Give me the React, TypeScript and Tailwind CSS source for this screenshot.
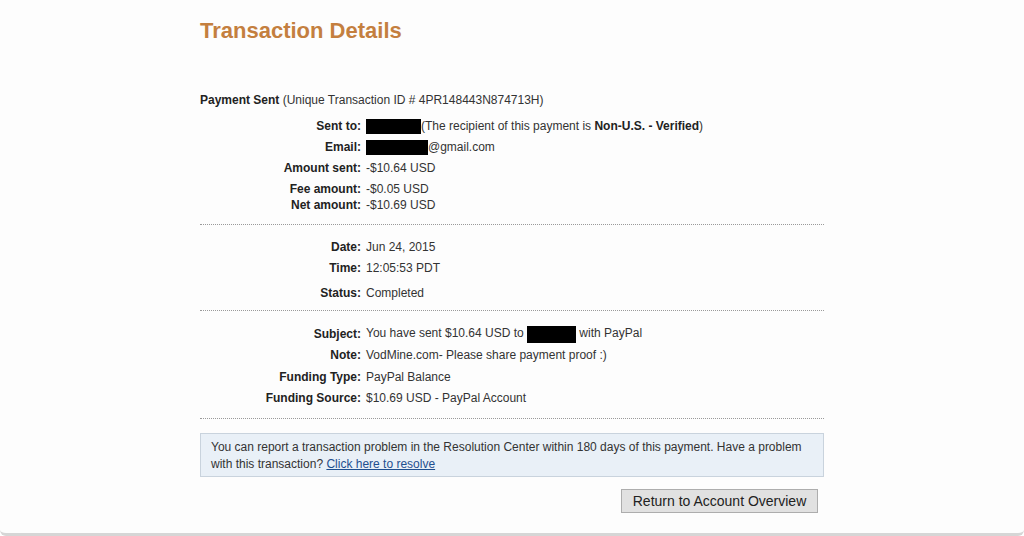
import React from "react";

interface Row {
    label: string;
    value: React.ReactNode;
    mt: string;
}

const Redacted: React.FC<{ className: string }> = ({ className }) => (
    <span className={`inline-block bg-black align-middle ${className}`} />
);

const DetailRow: React.FC<Row> = ({ label, value, mt }) => (
    <div className={`flex h-4 items-center leading-4 ${mt}`}>
        <span className="w-[161px] shrink-0 text-right font-bold text-[#222]">{label}</span>
        <span className="pl-[5px] text-[#333]">{value}</span>
    </div>
);

const Divider: React.FC<{ mt: string }> = ({ mt }) => (
    <div className={`border-t border-dotted border-[#9a9a9a] ${mt}`} />
);

const App: React.FC = () => {
    return (
        <div
            className="h-[536px] w-[1024px] overflow-hidden rounded-b-[6px] border-b-[3px] border-[#d6d6d6] bg-[#fdfdfd] text-[12px]"
            style={{ fontFamily: '"Liberation Sans", Arial, sans-serif' }}
        >
            <div className="mx-auto w-[624px]">
                <h1 className="pt-[18px] text-[22px] font-bold leading-[26px] text-[#c47f3f]">Transaction Details</h1>

                <div className="mt-[48px] h-4 leading-4 text-[#333]">
                    <span className="font-bold text-[#222]">Payment Sent</span> (Unique Transaction ID # 4PR148443N874713H)
                </div>

                <DetailRow
                    label="Sent to:"
                    mt="mt-[10px]"
                    value={
                        <>
                            <Redacted className="h-[15px] w-[55px]" />
                            (The recipient of this payment is <b className="text-[#222]">Non-U.S. - Verified</b>)
                        </>
                    }
                />
                <DetailRow
                    label="Email:"
                    mt="mt-[5px]"
                    value={
                        <>
                            <Redacted className="h-[15px] w-[62px]" />
                            @gmail.com
                        </>
                    }
                />
                <DetailRow label="Amount sent:" mt="mt-[5px]" value="-$10.64 USD" />
                <DetailRow label="Fee amount:" mt="mt-[5px]" value="-$0.05 USD" />
                <DetailRow label="Net amount:" mt="mt-0" value="-$10.69 USD" />

                <Divider mt="mt-[11px]" />

                <DetailRow label="Date:" mt="mt-[14px]" value="Jun 24, 2015" />
                <DetailRow label="Time:" mt="mt-[5px]" value="12:05:53 PDT" />
                <DetailRow label="Status:" mt="mt-[9px]" value="Completed" />

                <Divider mt="mt-[9px]" />

                <DetailRow
                    label="Subject:"
                    mt="mt-[15px]"
                    value={
                        <>
                            You have sent $10.64 USD to <Redacted className="h-[17px] w-[49px]" /> with PayPal
                        </>
                    }
                />
                <DetailRow label="Note:" mt="mt-[5px]" value="VodMine.com- Please share payment proof :)" />
                <DetailRow label="Funding Type:" mt="mt-[6px]" value="PayPal Balance" />
                <DetailRow label="Funding Source:" mt="mt-[5px]" value="$10.69 USD - PayPal Account" />

                <Divider mt="mt-[12px]" />

                <div className="mt-[14px] h-[44px] border border-[#c9d3dd] bg-[#e9f0f7] px-[10px] pt-[5px] leading-[17px] text-[#333]">
                    <p>
                        You can report a transaction problem in the Resolution Center within 180 days of this payment. Have a
                        problem
                    </p>
                    <p>
                        with this transaction?{" "}
                        <a href="#" className="text-[#1f4f8f] underline">
                            Click here to resolve
                        </a>
                    </p>
                </div>

                <div className="mt-[12px] flex justify-end pr-[6px]">
                    <button className="h-[24px] w-[197px] border border-[#adadad] bg-[#e1e1e1] text-[14px] leading-[22px] text-[#222]">
                        Return to Account Overview
                    </button>
                </div>
            </div>
        </div>
    );
};

export default App;
